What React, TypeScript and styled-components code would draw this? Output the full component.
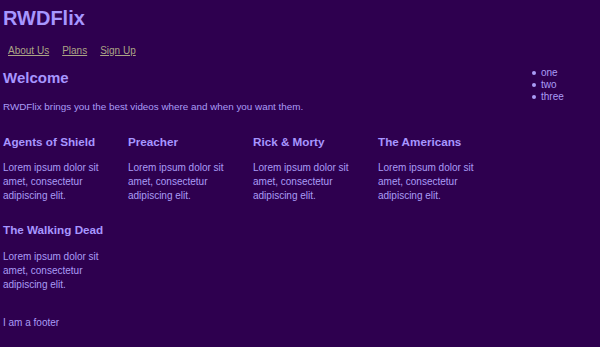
import styled, { createGlobalStyle } from 'styled-components';

const shows = ['Agents of Shield', 'Preacher', 'Rick & Morty', 'The Americans', 'The Walking Dead'];

const App = () => {
  return (
    <Page>
      <GlobalStyle />
      <Header>
        <Logo>RWDFlix</Logo>
        <Nav>
          <NavLink href='#'>About Us</NavLink>
          <NavLink href='#'>Plans</NavLink>
          <NavLink href='#'>Sign Up</NavLink>
        </Nav>
      </Header>
      <Content>
        <Main>
          <Heading>Welcome</Heading>
          <Intro>RWDFlix brings you the best videos where and when you want them.</Intro>
          <ShowGrid>
            {shows.map((show) => (
              <Show key={show}>
                <ShowTitle>{show}</ShowTitle>
                <ShowText>Lorem ipsum dolor sit amet, consectetur adipiscing elit.</ShowText>
              </Show>
            ))}
          </ShowGrid>
          <Footer>I am a footer</Footer>
        </Main>
        <Aside>
          <List>
            <Item>one</Item>
            <Item>two</Item>
            <Item>three</Item>
          </List>
        </Aside>
      </Content>
    </Page>
  );
};

export default App; /*
*/ // Styling

const GlobalStyle = createGlobalStyle`
  html, body {
    margin: 0;
    padding: 0;
    background: #2e004f;
  }
  body {
    font-family: 'Liberation Sans', Arial, sans-serif;
    color: #aa9cf6;
  }
`;

const Page = styled.div`
  min-height: 347px;
  padding: 0 3px;
  background: #2e004f;
`;

const Header = styled.header`
  display: flex;
  flex-direction: column;
`;

const Logo = styled.h1`
  margin: 7px 0 0;
  font-size: 20px;
  line-height: 23px;
  font-weight: 700;
  color: #a796ff;
`;

const Nav = styled.nav`
  display: flex;
  gap: 13px;
  margin-top: 14.7px;
  padding-left: 5px;
  font-size: 10px;
  line-height: 12px;
`;

const NavLink = styled.a`
  color: #aca585;
  text-decoration: underline;
`;

const Content = styled.div`
  display: flex;
  margin-top: 8px;
`;

const Main = styled.main`
  width: 500px;
`;

const Heading = styled.h2`
  margin: 4.3px 0 0;
  font-size: 15px;
  line-height: 17px;
  font-weight: 700;
  color: #a796ff;
`;

const Intro = styled.p`
  margin: 15.4px 0 0;
  font-size: 9.85px;
  line-height: 12px;
`;

const ShowGrid = styled.div`
  display: grid;
  grid-template-columns: repeat(4, 125px);
  row-gap: 19.9px;
  margin-top: 21.4px;
`;

const Show = styled.section`
  padding-right: 22px;
`;

const ShowTitle = styled.h3`
  margin: 0 0 12.7px;
  font-size: 11.7px;
  line-height: 14px;
  font-weight: 700;
  color: #a796ff;
`;

const ShowText = styled.p`
  margin: 0;
  font-size: 10px;
  line-height: 14px;
`;

const Footer = styled.footer`
  margin-top: 25.4px;
  font-size: 10px;
  line-height: 12px;
`;

const Aside = styled.aside`
  flex: 1;
`;

const List = styled.ul`
  list-style: none;
  margin: 2.5px 0 0;
  padding-left: 38px;
  font-size: 10px;
  line-height: 12px;
`;

const Item = styled.li`
  position: relative;

  &::before {
    content: '';
    position: absolute;
    left: -9.5px;
    top: 4px;
    width: 4px;
    height: 4px;
    border-radius: 50%;
    background: #aa9cf6;
  }
`;
